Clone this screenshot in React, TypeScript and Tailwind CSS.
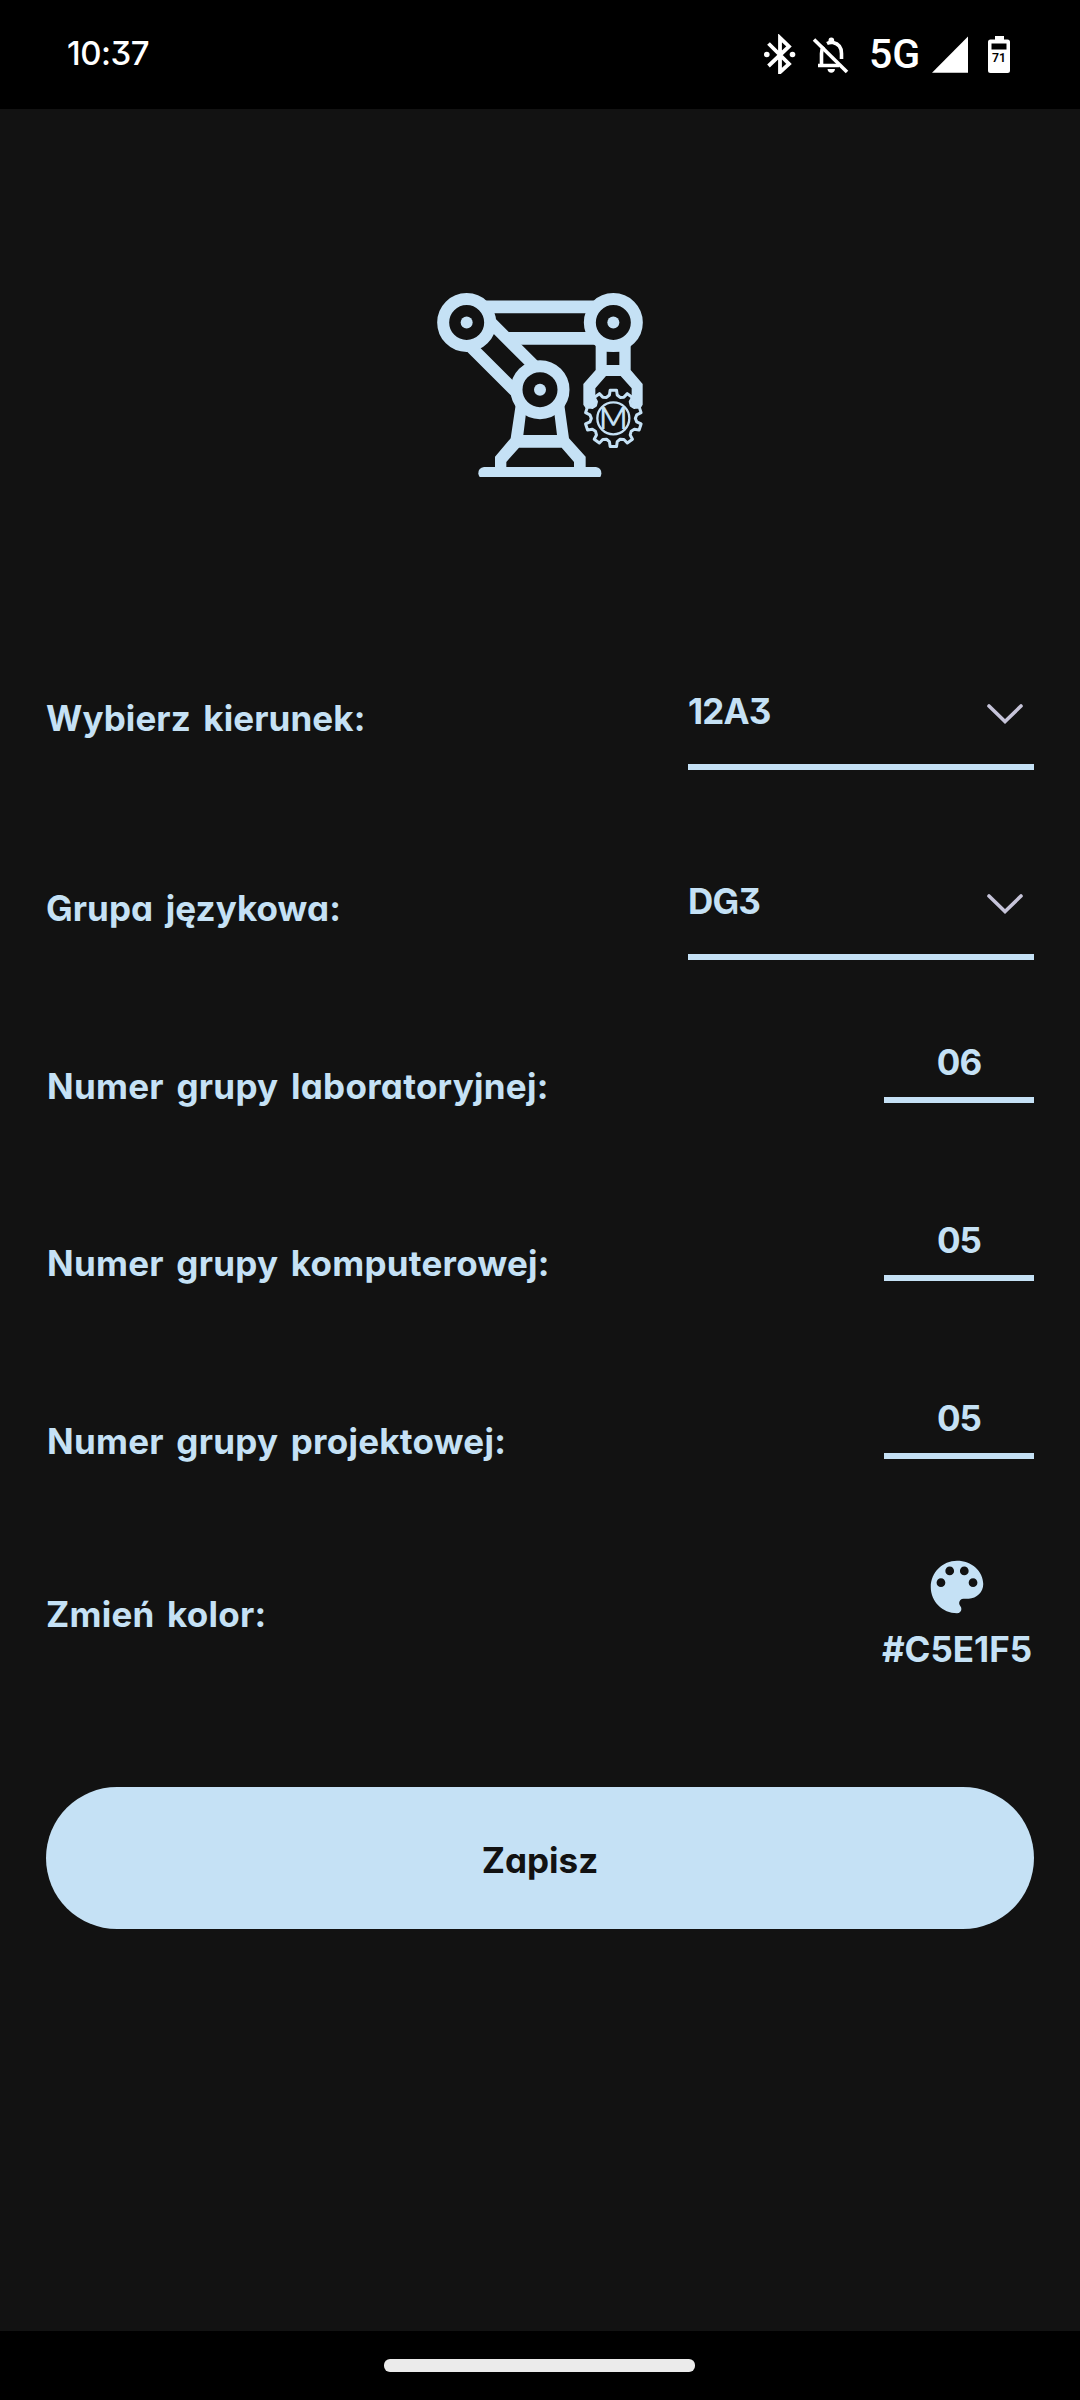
import React from "react";

const GEAR = (() => {
  const cx = 580;
  const cy = 415;
  const pts: string[] = [];
  const add = (deg: number, r: number) => {
    const a = (deg * Math.PI) / 180;
    pts.push(`${(cx + r * Math.cos(a)).toFixed(1)},${(cy + r * Math.sin(a)).toFixed(1)}`);
  };
  for (let i = 0; i < 10; i++) {
    const d = -90 + i * 36;
    add(d - 9.5, 71);
    add(d - 6.5, 85);
    add(d + 6.5, 85);
    add(d + 9.5, 71);
    add(d + 18, 66);
  }
  return pts.join(" ");
})();

function Joint({ x, y }: { x: number; y: number }) {
  return (
    <>
      <circle cx={x} cy={y} r="70.5" fill="#121212" stroke="#c5e1f5" strokeWidth="36" />
      <circle cx={x} cy={y} r="18" fill="#c5e1f5" />
    </>
  );
}

function RobotLogo() {
  return (
    <svg viewBox="0 0 720 630" className="h-[210px] w-[240px]">
      <g stroke="#c5e1f5" fill="none">
        <path d="M140 80.500H580M262 175H580" strokeWidth="38" />
        <path d="M190 105L350 265M140 188L292 340" strokeWidth="36" />
      </g>
      <g fill="#c5e1f5" fillRule="evenodd">
        <path d="M287 375L272 475L225 530V565H497V530L447 475L433 375ZM318 400L310 465H411L403 400ZM297 503L259 546V562H462V546L425 503Z" />
        <path d="M192 561H528Q544 563 544 580Q544 587 541 591H179Q175 587 175 580Q175 563 192 561Z" />
        <path d="M527 185V270L490 312V374L499 388H526V325L558 288H602L635 325V388H660L668 374V312L632 270V185ZM560 215H598V255H560Z" />
      </g>
      <Joint x={140} y={127.500} />
      <Joint x={580} y={127.500} />
      <Joint x={360} y={329} />
      <polygon points={GEAR} fill="#121212" stroke="#c5e1f5" strokeWidth="9" strokeLinejoin="round" />
      <circle cx="580" cy="415" r="48" fill="none" stroke="#c5e1f5" strokeWidth="7" />
      <text
        x="580"
        y="447"
        textAnchor="middle"
        textLength="86"
        lengthAdjust="spacingAndGlyphs"
        fontFamily="Lato"
        fontWeight="400"
        fontSize="90"
        fill="#c5e1f5"
      >
        M
      </text>
    </svg>
  );
}

function StatusBar() {
  return (
    <header className="flex h-[109px] items-start justify-between bg-black pl-[67px] pr-[68px] text-white">
      <span className="mt-[31px] text-[33px] font-medium leading-[44px] tracking-[-0.5px]">10:37</span>
      <div className="mt-[34px] flex items-start">
        <svg viewBox="0 0 32 40" className="h-10 w-8">
          <g fill="none" stroke="#fff" strokeWidth="3.800">
            <path d="M4.500 9.500L25 30L16 38.200V3.800L25 12.500L4.500 32" />
          </g>
          <circle cx="2.800" cy="20.500" r="2.800" fill="#fff" />
          <circle cx="28.500" cy="20.500" r="2.800" fill="#fff" />
        </svg>
        <svg viewBox="0 0 38 40" className="ml-[16px] h-10 w-[38px]">
          <g fill="none" stroke="#fff" strokeWidth="3.600">
            <path d="M6 31.500H27M9.500 31V19.500Q9.500 15 11.500 12.500M15 9.500Q18 8 21 8.600Q29.500 10.500 29.500 19.500V25" />
            <path d="M2 5.500L35 38" />
          </g>
          <path d="M16.500 8V6.500Q16.500 3.600 19.300 3.600Q22.200 3.600 22.200 6.500V8ZM15.500 35H23Q22.500 38.800 19.300 38.800Q16 38.800 15.500 35Z" fill="#fff" />
        </svg>
        <span className="ml-[19px] mr-px mt-[-4px] w-[54px] font-['Roboto'] text-[41px] font-medium leading-[48px]">5G</span>
        <svg viewBox="0 0 37 40" className="ml-[8px] h-10 w-[37px]">
          <path d="M0 38.700L36 2.500V38.700Z" fill="#fff" />
        </svg>
        <svg viewBox="0 0 24 40" className="ml-[19px] h-10 w-6">
          <path d="M7 2H16V5.500H19.500Q22 5.500 22 8V36.500Q22 39 19.500 39H2.500Q0 39 0 36.500V8Q0 5.500 2.500 5.500H7Z" fill="#fff" />
          <path d="M3.500 9.500H18.500V15.500H3.500Z" fill="#000" />
          <text
            x="11"
            y="27.500"
            textAnchor="middle"
            textLength="14"
            lengthAdjust="spacingAndGlyphs"
            fontFamily="Roboto"
            fontWeight="600"
            fontSize="13.500"
            fill="#000"
          >
            71
          </text>
        </svg>
      </div>
    </header>
  );
}

function Select({ value }: { value: string }) {
  return (
    <div className="flex h-[81px] w-[346px] items-start justify-between border-b-[6px] border-[#c5e1f5]">
      <span className="font-bold tracking-[-0.8px]">{value}</span>
      <svg viewBox="0 0 38 22" className="mr-[10px] mt-[14px] h-[22px] w-[38px]">
        <path d="M3 3L19 18.500L35 3" fill="none" stroke="#c6c4d9" strokeWidth="3.600" strokeLinecap="round" />
      </svg>
    </div>
  );
}

function GroupInput({ value }: { value: string }) {
  return (
    <div className="h-[63px] w-[150px] border-b-[6px] border-[#c5e1f5] text-center">
      <span className="tracking-[-1px]">{value}</span>
    </div>
  );
}

export default function App() {
  return (
    <div className="flex h-[2400px] w-[1080px] flex-col bg-[#121212] font-['Inter',sans-serif] text-[35px] font-[650] leading-[44px] text-[#c5e1f5] [font-feature-settings:'cv11','cv09','cv10']">
      <StatusBar />
      <main className="flex flex-1 flex-col px-[46px] [word-spacing:4px]">
        <div className="mt-[171px] flex justify-center">
          <RobotLogo />
        </div>
        <div className="mt-[199px] flex items-start justify-between">
          <span className="mt-[7px] tracking-[0.1px]">Wybierz kierunek:</span>
          <Select value="12A3" />
        </div>
        <div className="mt-[109px] flex items-start justify-between">
          <span className="mt-[7px] tracking-[0.1px]">Grupa językowa:</span>
          <Select value="DG3" />
        </div>
        <div className="mt-[80px] flex h-[63px] items-start justify-between">
          <span className="ml-px mt-[24px] tracking-[0.27px]">Numer grupy laboratoryjnej:</span>
          <GroupInput value="06" />
        </div>
        <div className="mt-[115px] flex h-[63px] items-start justify-between">
          <span className="ml-px mt-[23px] tracking-[0.25px]">Numer grupy komputerowej:</span>
          <GroupInput value="05" />
        </div>
        <div className="mt-[115px] flex h-[63px] items-start justify-between">
          <span className="ml-px mt-[23px] tracking-[0.25px]">Numer grupy projektowej:</span>
          <GroupInput value="05" />
        </div>
        <div className="mt-[93px] flex items-start justify-between">
          <span className="mt-[40px] tracking-[0.25px]">Zmień kolor:</span>
          <div className="flex w-[154px] flex-col items-center">
            <svg viewBox="0 0 24 24" className="h-[70px] w-[70px]" fill="#c5e1f5">
              <path d="M12 3c-4.970 0-9 4.030-9 9s4.030 9 9 9c.83 0 1.500-.67 1.500-1.500 0-.39-.15-.74-.39-1.010-.23-.26-.38-.61-.38-.99 0-.83.67-1.500 1.500-1.500H16c2.760 0 5-2.240 5-5 0-4.420-4.030-8-9-8zm-5.500 9c-.83 0-1.500-.67-1.500-1.500S5.670 9 6.500 9 8 9.670 8 10.500 7.330 12 6.500 12zm3-4C8.670 8 8 7.330 8 6.500S8.670 5 9.500 5s1.500.67 1.500 1.500S10.330 8 9.500 8zm5 0c-.83 0-1.500-.67-1.500-1.500S13.670 5 14.500 5s1.500.67 1.500 1.500S15.330 8 14.500 8zm3 4c-.83 0-1.500-.67-1.500-1.500S16.670 9 17.500 9s1.500.67 1.500 1.500-.67 1.500-1.500 1.500z" />
            </svg>
            <span className="mt-[5px] font-bold">#C5E1F5</span>
          </div>
        </div>
        <button className="mt-[116px] h-[142px] w-full rounded-full bg-[#c5e1f5] pt-1 text-[#121212]">Zapisz</button>
      </main>
      <footer className="flex h-[69px] items-start justify-center bg-black pr-px pt-[28px]">
        <div className="h-[13px] w-[311px] rounded-[6px] bg-[#ebebeb]" />
      </footer>
    </div>
  );
}
